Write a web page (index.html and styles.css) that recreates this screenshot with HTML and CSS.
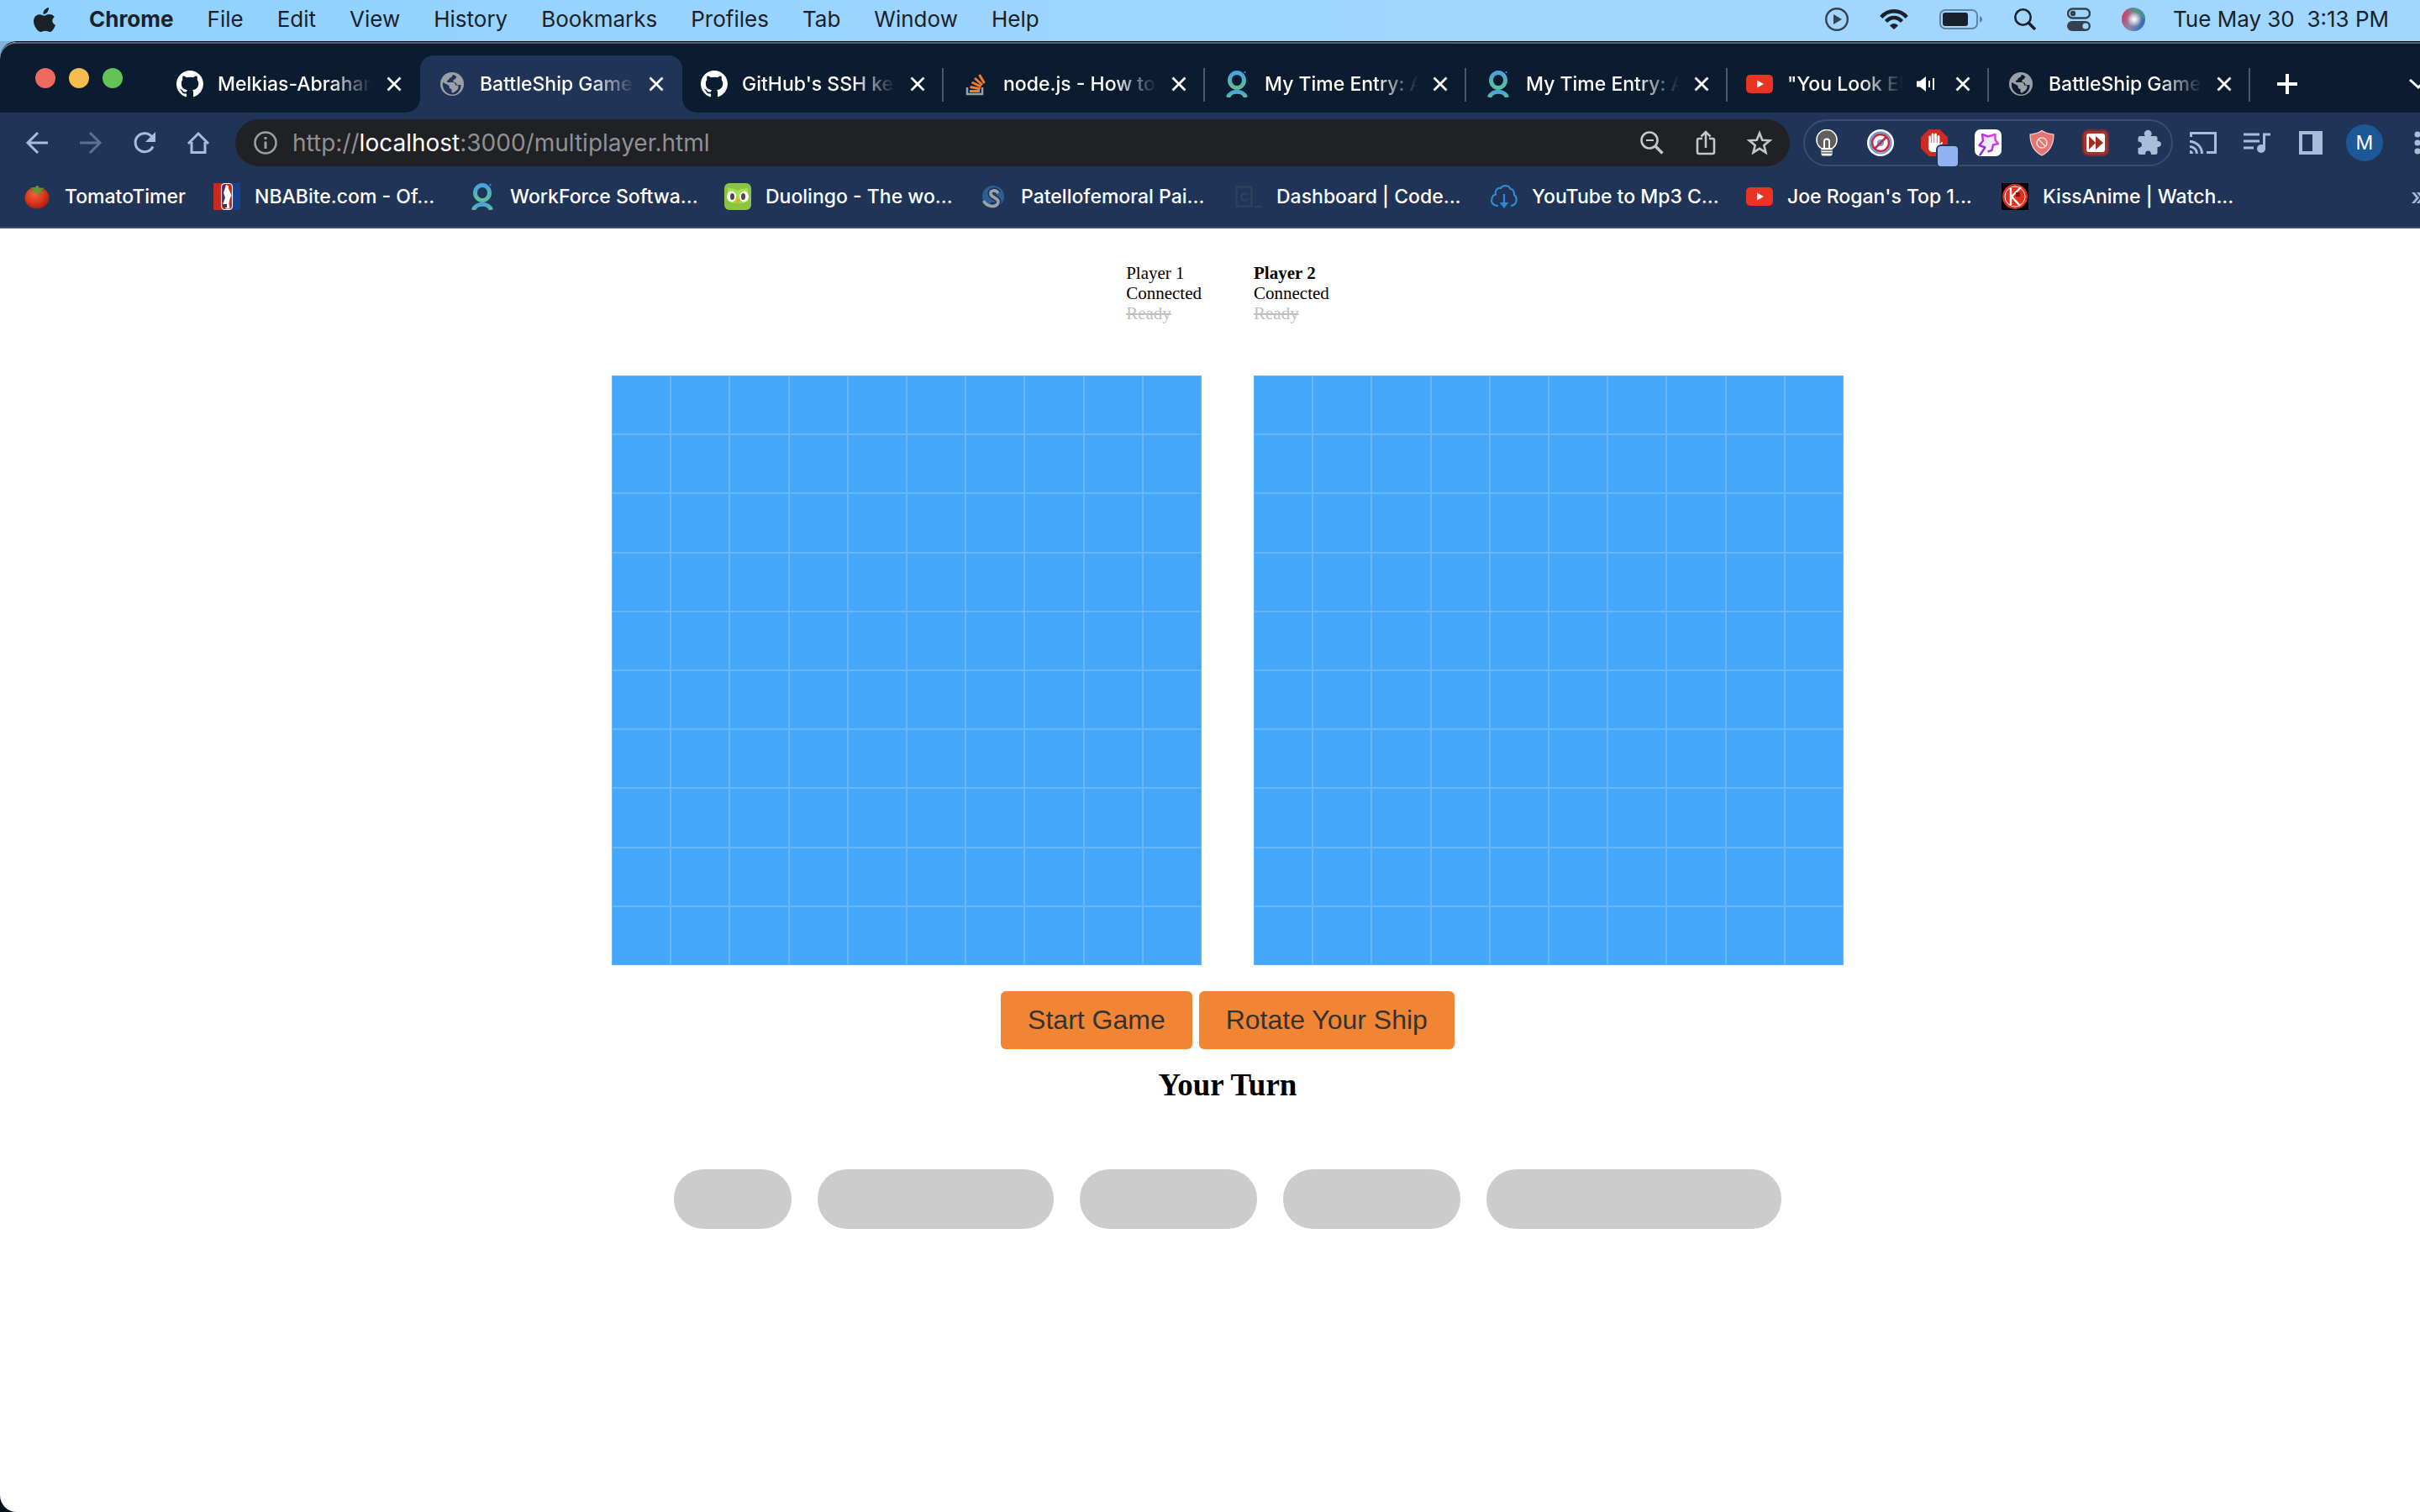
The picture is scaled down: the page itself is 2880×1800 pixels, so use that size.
FILE: index.html
```html
<!DOCTYPE html>
<html lang="en">
<head>
<meta charset="utf-8">
<title>BattleShip Game</title>
<link rel="stylesheet" href="styles.css">
</head>
<body>
<svg class="defs" aria-hidden="true">
  <defs>
    <linearGradient id="teal" x1="0" y1="0" x2="0" y2="1"><stop offset="0" stop-color="#4aa3dc"/><stop offset="1" stop-color="#5bc09a"/></linearGradient>
    <linearGradient id="purple" x1="0" y1="1" x2="1" y2="0"><stop offset="0" stop-color="#7a2bd0"/><stop offset="1" stop-color="#ee3df0"/></linearGradient>
    <radialGradient id="tomato" cx=".4" cy=".35" r=".7"><stop offset="0" stop-color="#f4603c"/><stop offset=".6" stop-color="#d93217"/><stop offset="1" stop-color="#9c2010"/></radialGradient>
    <radialGradient id="glow"><stop offset="0" stop-color="#fff"/><stop offset=".3" stop-color="#fff" stop-opacity=".75"/><stop offset="1" stop-color="#fff" stop-opacity="0"/></radialGradient>
    <linearGradient id="siri" x1="0" y1=".3" x2="1" y2=".7"><stop offset="0" stop-color="#d8345f"/><stop offset=".45" stop-color="#8a86a8"/><stop offset="1" stop-color="#2a6ab8"/></linearGradient>
    <symbol id="github" viewBox="0 0 16 16"><path fill="#fff" d="M8 0C3.58 0 0 3.58 0 8c0 3.54 2.29 6.53 5.47 7.59.4.07.55-.17.55-.38 0-.19-.01-.82-.01-1.49-2.01.37-2.53-.49-2.69-.94-.09-.23-.48-.94-.82-1.13-.28-.15-.68-.52-.01-.53.63-.01 1.08.58 1.23.82.72 1.21 1.87.87 2.33.66.07-.52.28-.87.51-1.07-1.78-.2-3.64-.89-3.64-3.95 0-.87.31-1.59.82-2.15-.08-.2-.36-1.02.08-2.12 0 0 .67-.21 2.2.82.64-.18 1.32-.27 2-.27s1.36.09 2 .27c1.53-1.04 2.2-.82 2.2-.82.44 1.1.16 1.92.08 2.12.51.56.82 1.27.82 2.15 0 3.07-1.87 3.75-3.65 3.95.29.25.54.73.54 1.48 0 1.07-.01 1.93-.01 2.2 0 .21.15.46.55.38A8.01 8.01 0 0 0 16 8c0-4.42-3.58-8-8-8z"/></symbol>
    <symbol id="globe" viewBox="0 0 32 32"><circle cx="16" cy="16" r="14" fill="#9aa0a6"/><path fill="currentColor" d="M17 5c-1 1-1 3-3 3.500-2 .5-1 2.500-3 3-1.500.5-1.500 2 0 2.500h6c2 0 3 1.500 3 3.500 2 0 4 .5 3.500 2.500-.5 3-3 4.500-6 6.500-1 0-2-.5-2-1.500v-3c-2 0-3-1-3-3v-1L5 14c-1 6 2 13 10 14.500 3 .3 6-.5 8-2.500 2-2 4-5 3.500-9-2 0-3 1-4.500 0s-1-3-3-3-2.500-3 0-3.500c1.500-.5 1-2 2.500-3C20 6 18.500 5.200 17 5z"/></symbol>
    <symbol id="workforce" viewBox="0 0 32 32"><g fill="none" stroke="url(#teal)" stroke-width="5"><ellipse cx="16" cy="11.500" rx="8.500" ry="9"/><path d="M5.500 32C8 23 24 23 26.500 32"/></g><circle cx="25.500" cy="2" r="1" fill="#4aa3dc"/></symbol>
    <symbol id="overflow" viewBox="0 0 32 32"><path fill="none" stroke="#9aa0a6" stroke-width="2.500" d="M6 20v8h18v-8"/><path fill="none" stroke="#ee7f2d" stroke-width="3" d="M9 24.500h12M9.500 19.500l12 2.200M11.500 14l11 5M15 9l9 8M20.500 5l6 10"/></symbol>
    <symbol id="youtube" viewBox="0 0 32 32"><rect y="5" width="32" height="22" rx="5" fill="#e93323"/><path fill="#fff" d="M13 11.500l8 4.500-8 4.500z"/></symbol>
    <symbol id="close" viewBox="0 0 18 18"><path fill="none" stroke="#fff" stroke-width="2.800" d="M1.500 1.500l15 15M16.500 1.500l-15 15"/></symbol>
  </defs>
</svg>

<header class="menubar">
  <nav class="menus" aria-label="Menu bar">
    <button class="menu" aria-label="Apple"><svg class="apple" viewBox="0 0 26 32"><path fill="#1a2128" d="M18 0c.3 2-.6 4-1.800 5.500S13 8 11.500 7.800C11.200 6 12 4 13.200 2.600 14.400 1.200 16.400.2 18 0zM24.800 11.200c-3.600 2.200-3.300 7.700 1.200 9.500-1 3-3.800 8.300-6.600 8.300-2 0-3-1.200-5.400-1.200S10.300 29 8.500 29C5 29 0 22 0 16.500 0 11 3.500 8.200 6.900 8.200c2.300 0 4.200 1.500 5.600 1.500 1.300 0 3.600-1.700 6.200-1.700 2.500 0 4.700 1.200 6.100 3.200z" transform="translate(0 2)"/></svg></button>
    <button class="menu app">Chrome</button>
    <button class="menu">File</button>
    <button class="menu">Edit</button>
    <button class="menu">View</button>
    <button class="menu">History</button>
    <button class="menu">Bookmarks</button>
    <button class="menu">Profiles</button>
    <button class="menu">Tab</button>
    <button class="menu">Window</button>
    <button class="menu">Help</button>
  </nav>
  <div class="status">
    <svg width="28" height="28" viewBox="0 0 28 28"><circle cx="14" cy="14" r="12.800" fill="none" stroke="#34424f" stroke-width="2.400"/><path fill="#34424f" d="M10 8l10 6-10 6z"/></svg>
    <svg width="34" height="26" viewBox="0 0 34 26"><g fill="none" stroke="#1a2128" stroke-width="4.400"><path d="M1.800 10.500C10 .8 24 .8 32.200 10.500"/><path d="M7.500 15.500c5.500-6 13.500-6 19 0"/></g><path fill="#1a2128" d="M17 25l-5-4.500c2.500-3.500 7.500-3.500 10 0z"/></svg>
    <svg width="52" height="24" viewBox="0 0 52 24"><rect x="1" y="1" width="44" height="22" rx="6" fill="none" stroke="#5f829d" stroke-width="2"/><rect x="4" y="4" width="30" height="16" rx="3" fill="#1a2128"/><path fill="#5f829d" d="M48 8c4 1.500 4 6.500 0 8z"/></svg>
    <svg width="26" height="26" viewBox="0 0 26 26"><circle cx="10.500" cy="10.500" r="9.200" fill="none" stroke="#1a2128" stroke-width="2.600"/><path stroke="#1a2128" stroke-width="3.600" d="M17 17l8 8"/></svg>
    <svg width="28" height="28" viewBox="0 0 28 28"><rect x="1" y="1.500" width="26" height="11" rx="5.500" fill="none" stroke="#34424f" stroke-width="2.400"/><circle cx="7" cy="7" r="3.200" fill="#34424f"/><rect y="16" width="28" height="12" rx="6" fill="#34424f"/><circle cx="22" cy="22" r="3.600" fill="#a0d6ff"/></svg>
    <svg width="28" height="28" viewBox="0 0 28 28"><circle cx="14" cy="14" r="14" fill="url(#siri)"/><path fill="#3f9c7c" opacity=".85" d="M7 2.500C15-2 27 3 27.500 14 22 8 15 5 7 2.500z"/><circle cx="15" cy="14" r="9" fill="url(#glow)"/></svg>
    <time class="clock">Tue May 30&nbsp; 3:13 PM</time>
  </div>
</header>

<div class="desktop">
<div class="window">
  <div class="tabstrip">
    <div class="lights">
      <button class="light red" aria-label="Close window"></button>
      <button class="light yellow" aria-label="Minimize"></button>
      <button class="light green" aria-label="Zoom"></button>
    </div>
    <div class="tabs">
      <div class="tab"><svg class="fav"><use href="#github"/></svg><span class="title">Melkias-Abraham</span><button class="close" aria-label="Close tab"><svg><use href="#close"/></svg></button></div>
      <div class="tab active"><svg class="fav"><use href="#globe"/></svg><span class="title">BattleShip Game</span><button class="close" aria-label="Close tab"><svg><use href="#close"/></svg></button></div>
      <div class="tab divided"><svg class="fav"><use href="#github"/></svg><span class="title">GitHub's SSH keys</span><button class="close" aria-label="Close tab"><svg><use href="#close"/></svg></button></div>
      <div class="tab divided"><svg class="fav"><use href="#overflow"/></svg><span class="title">node.js - How to fix</span><button class="close" aria-label="Close tab"><svg><use href="#close"/></svg></button></div>
      <div class="tab divided"><svg class="fav"><use href="#workforce"/></svg><span class="title">My Time Entry: Abr</span><button class="close" aria-label="Close tab"><svg><use href="#close"/></svg></button></div>
      <div class="tab divided"><svg class="fav"><use href="#workforce"/></svg><span class="title">My Time Entry: Abr</span><button class="close" aria-label="Close tab"><svg><use href="#close"/></svg></button></div>
      <div class="tab divided"><svg class="fav"><use href="#youtube"/></svg><span class="title">"You Look Elite</span><svg class="sound" viewBox="0 0 22 20"><path fill="#fff" d="M0 6.500h4L11 1v18l-7-5.500H0z"/><path stroke="#fff" stroke-width="2" d="M15 6v8M20 3v14"/></svg><button class="close" aria-label="Close tab"><svg><use href="#close"/></svg></button></div>
      <div class="tab divided"><svg class="fav"><use href="#globe"/></svg><span class="title">BattleShip Game</span><button class="close" aria-label="Close tab"><svg><use href="#close"/></svg></button></div>
      <button class="newtab" aria-label="New tab"><svg width="26" height="26" viewBox="0 0 26 26"><path stroke="#fff" stroke-width="4" d="M13 1v24M1 13h24"/></svg></button>
    </div>
    <button class="tabsearch" aria-label="Search tabs"><svg width="24" height="16" viewBox="0 0 24 16"><path fill="none" stroke="#fff" stroke-width="3" d="M2 3l10 9 10-9"/></svg></button>
  </div>

  <div class="toolbar">
    <button class="tool" aria-label="Back"><svg viewBox="0 0 32 32"><path fill="none" stroke="#a9bcd9" stroke-width="3" d="M29 16H5M17 4L5 16l12 12"/></svg></button>
    <button class="tool" aria-label="Forward"><svg viewBox="0 0 32 32"><path fill="none" stroke="#5d7092" stroke-width="3" d="M3 16h24M15 4l12 12-12 12"/></svg></button>
    <button class="tool" aria-label="Reload"><svg viewBox="0 0 32 32"><path fill="none" stroke="#a9bcd9" stroke-width="3" d="M26 20.500A11 11 0 1 1 25.500 10"/><path fill="#a9bcd9" d="M29 3v12H17z"/></svg></button>
    <button class="tool" aria-label="Home"><svg viewBox="0 0 32 32"><path fill="none" stroke="#a9bcd9" stroke-width="3" d="M4 17L16 5l12 12M8 15v12.500h16V15"/></svg></button>

    <div class="omnibox">
      <button class="tool" aria-label="Site information"><svg viewBox="0 0 32 32"><circle cx="16" cy="16" r="12.500" fill="none" stroke="#9aa0a6" stroke-width="2.600"/><path stroke="#9aa0a6" stroke-width="3" d="M16 14.500V23M16 9v3"/></svg></button>
      <a class="url" href="http://localhost:3000/multiplayer.html">http://<b>localhost</b>:3000/multiplayer.html</a>
      <button class="tool" aria-label="Zoom level"><svg viewBox="0 0 32 32"><circle cx="13" cy="13" r="9.500" fill="none" stroke="#c3c6ca" stroke-width="2.600"/><path stroke="#c3c6ca" stroke-width="2" d="M9 13h9"/><path stroke="#c3c6ca" stroke-width="3.600" d="M20 20l8.500 8.500"/></svg></button>
      <button class="tool" aria-label="Share"><svg viewBox="0 0 32 32"><path fill="none" stroke="#c3c6ca" stroke-width="2.600" d="M12 11H8q-2 0-2 2v14q0 2 2 2h16q2 0 2-2V13q0-2-2-2h-4M16 22V4M10.500 8.500L16 3l5.500 5.500"/></svg></button>
      <button class="tool" aria-label="Bookmark this tab"><svg viewBox="0 0 32 32"><path fill="none" stroke="#c3c6ca" stroke-width="2.600" d="M16 4.500l3.300 8.200 8.900.6-6.900 5.700 2.200 8.600-7.500-4.800-7.500 4.800 2.200-8.600-6.900-5.700 8.900-.6z"/></svg></button>
    </div>

    <div class="extensions">
      <button class="tool" aria-label="Lights off"><svg viewBox="0 0 32 32"><circle cx="16" cy="12.500" r="12" fill="#5f5f5f" stroke="#fff" stroke-width="1.600"/><path fill="#5f5f5f" stroke="#fff" stroke-width="2" d="M13 22v-8q0-2.500 3-2.500t3 2.500v8"/><rect x="9.500" y="22" width="13" height="9.500" rx="2" fill="#fff"/><path stroke="#5f5f5f" stroke-width="1.500" d="M10 25h12M10 28h12"/></svg></button>
      <button class="tool" aria-label="Blocker"><svg viewBox="0 0 32 32"><circle cx="16" cy="16" r="16" fill="#fff"/><circle cx="16" cy="16" r="12.500" fill="none" stroke="#5f93e8" stroke-width="2"/><circle cx="16" cy="16" r="4" fill="#6aa0ea"/><g fill="none" stroke="#c3283c" stroke-width="2.600"><circle cx="16" cy="16" r="10"/><path d="M9 23L23 9"/></g></svg></button>
      <button class="tool" aria-label="Ad block"><svg viewBox="0 0 32 32"><path fill="#d02b20" d="M9.500 0h13L32 9.500v13L22.500 32h-13L0 22.500v-13z"/><g stroke="#fff" stroke-width="2.800" stroke-linecap="round"><path d="M10.500 9v10M14 6v12M17.500 6v12M21 8.500v12"/></g><path fill="#fff" d="M9.100 16h13.300v3l1.500-3q1-1.500 2.100-.5l-3.500 9q-1 2.500-3.500 2.500h-5q-4 0-4.900-4z"/></svg><i class="badge"></i></button>
      <button class="tool" aria-label="Magic star"><svg viewBox="0 0 32 32"><rect width="32" height="32" rx="7" fill="#fff"/><path fill="#f1e9f6" d="M13 20l-6-1.500 3-5L9 6l7 2.500L24.500 6v6.500L28 17l-6 1.500-1 6z"/><path fill="none" stroke="url(#purple)" stroke-width="2.400" stroke-linejoin="round" d="M6 31l6.500-9.500L5.500 19l4.500-5.500L9 6l7 2.500L24.500 6v6.500L28 17l-6 1.500-1.500 6.500-5 1.500"/></svg></button>
      <button class="tool" aria-label="Shield"><svg viewBox="0 0 32 32"><path fill="#e57570" stroke="#f2d3d2" stroke-width="1.200" d="M16 1.500c4 3 8.500 4 14 4.500 0 12-4 20-14 25C6 26 2 18 2 6c5.500-.5 10-1.500 14-4.500z"/><g fill="none" stroke="#f0dcdc" stroke-width="1.600"><circle cx="16" cy="16" r="6"/><path d="M12 12l8 8"/></g></svg></button>
      <button class="tool" aria-label="Skip"><svg viewBox="0 0 32 32"><rect x="1" y="1" width="30" height="30" rx="6" fill="#a83229" stroke="#7e2a33" stroke-width="2"/><rect x="5" y="5" width="22" height="22" rx="3" fill="#fff"/><path fill="#a32b22" d="M8 8l8 8-8 8zM16 8l9 8-9 8z"/></svg></button>
      <button class="tool" aria-label="Extensions"><svg viewBox="0 0 32 32"><path fill="#a9bcd9" d="M9.500 8H11a4.300 4.300 0 1 1 6.500 0H23q2.500 0 2.500 2.500V14a3.600 3.600 0 1 1 0 7v6.500Q25.500 30 23 30h-5c0-2.500-1-4.500-3.500-4.500S11 27.500 11 30H5q-2.500 0-2.500-2.500V22c2.500 0 4.500-1.200 4.500-3.700S5 14.500 2.500 14.500v-4Q2.500 8 5 8z"/></svg></button>
    </div>

    <div class="actions">
      <button class="tool" aria-label="Cast"><svg viewBox="0 0 32 32"><g fill="none" stroke="#a9bcd9" stroke-width="3"><path d="M1.500 9V4.500h29v23H20"/><path d="M0 14.500A14.500 14.500 0 0 1 14.500 29M0 20.500A8.500 8.500 0 0 1 8.500 29"/></g><path fill="#a9bcd9" d="M0 25a4 4 0 0 1 4 4H0z"/></svg></button>
      <button class="tool" aria-label="Media"><svg viewBox="0 0 32 32"><path stroke="#a9bcd9" stroke-width="3" d="M0 6h19M0 14h19M0 22h12"/><circle cx="21" cy="23" r="5" fill="#a9bcd9"/><path fill="none" stroke="#a9bcd9" stroke-width="3" d="M24.500 23V6H32"/></svg></button>
      <button class="tool" aria-label="Side panel"><svg viewBox="0 0 32 32"><path fill="#a9bcd9" fill-rule="evenodd" d="M2 2h28v28H2zM6 6v20h12V6z"/></svg></button>
      <button class="avatar" aria-label="Profile M">M</button>
      <button class="tool" aria-label="More"><svg viewBox="0 0 32 32"><g fill="#a9bcd9"><circle cx="15" cy="6" r="3.500"/><circle cx="15" cy="16" r="3.500"/><circle cx="15" cy="26" r="3.500"/></g></svg></button>
    </div>
  </div>

  <nav class="bookmarks" aria-label="Bookmarks">
    <a class="bookmark short" href="#"><svg viewBox="0 0 32 32"><ellipse cx="16" cy="17.500" rx="14.500" ry="13" fill="url(#tomato)"/><path fill="#5c9a33" d="M15 3h2.500l.5 3.500 7-1-4 3 4 4-6-2-2.500 5-2-5.500-6.500 1.500 4-4-4-2.500 6.500.5z"/></svg><span>TomatoTimer</span></a>
    <a class="bookmark" href="#"><svg viewBox="0 0 32 32"><path fill="#c9281e" d="M0 0h16v32H0z"/><path fill="#17408b" d="M16 0h16v32H16z"/><rect x="9.500" y=".5" width="13" height="31" rx="4" fill="#c9281e" stroke="#fff" stroke-width="1.200"/><path fill="#17408b" d="M10.500 4q0-2.500 3-2.500h1L12 12l2 6-3.500 8z"/><path fill="#fff" d="M15 2l3 1.500v3l3.500 8-2 4-1 6 1 6H15l-4-5 3-8-2-6 2-6z"/><path fill="#17408b" d="M11 25h5v4h-5z"/></svg><span>NBABite.com - Of...</span></a>
    <a class="bookmark" href="#"><svg><use href="#workforce"/></svg><span>WorkForce Softwa...</span></a>
    <a class="bookmark" href="#"><svg viewBox="0 0 32 32"><rect width="32" height="32" rx="6" fill="#8bc53f"/><path fill="#a5e04a" d="M4 6q8 0 12 3 4-3 12-3v14q-6 6-12 3-6 3-12-3z"/><ellipse cx="8.500" cy="16" rx="5.500" ry="6.500" fill="#fff"/><ellipse cx="23.500" cy="16" rx="5.500" ry="6.500" fill="#fff"/><ellipse cx="9.500" cy="16" rx="2.500" ry="4" fill="#4b4b4b"/><ellipse cx="22.500" cy="16" rx="2.500" ry="4" fill="#4b4b4b"/><path fill="#f5a02c" d="M16 18l3.500 3-3.500 3.500-3.500-3.500z"/></svg><span>Duolingo - The wo...</span></a>
    <a class="bookmark" href="#"><svg viewBox="0 0 32 32"><circle cx="16" cy="16" r="13" fill="#2a6096"/><path fill="none" stroke="#203457" stroke-width="7" d="M22 12c-3-5-10-3.500-9 1s9 4.500 9 9-6 6-10 3"/><path fill="none" stroke="#9ba3aa" stroke-width="3.600" d="M22 12c-3-5-10-3.500-9 1s9 4.500 9 9-5 6.500-10 5c-4-1-6-3-7.500-6"/></svg><span>Patellofemoral Pai...</span></a>
    <a class="bookmark" href="#"><svg viewBox="0 0 32 32"><g fill="none" stroke="#28445a" stroke-width="2.600"><path d="M1.500 4.500h18v23h-18z"/><path d="M14.500 14c-1-2.500-7-2.500-7 2.500s6 5 7 2M23 28h8"/></g></svg><span>Dashboard | Code...</span></a>
    <a class="bookmark" href="#"><svg viewBox="0 0 32 32"><g fill="none" stroke="#3187d2" stroke-width="2.200"><path d="M9 27C3 27 0 23 1.500 19c0-3 2-5 4.500-5.500C5 9 8 5 12 6c2-4 10-4 11.500 1 3.500 0 4.500 4 4.500 7 4 3 4 12-4 13M16 13v13"/></g><path fill="#3187d2" d="M10.500 23h11L16 30z"/></svg><span>YouTube to Mp3 C...</span></a>
    <a class="bookmark" href="#"><svg><use href="#youtube"/></svg><span>Joe Rogan's Top 1...</span></a>
    <a class="bookmark" href="#"><svg viewBox="0 0 32 32"><path d="M0 0h32v32H0z"/><circle cx="16" cy="16" r="15" fill="#e5301f"/><circle cx="16" cy="16" r="12" fill="none" stroke="#fff" stroke-width="1"/><path fill="none" stroke="#fff" stroke-width="2.400" d="M11 6v20M23 5L12 16l10 11"/><path fill="#7c1a12" d="M17 11h5v5h-5z"/></svg><span>KissAnime | Watch...</span></a>
    <button class="more" aria-label="More bookmarks">»</button>
  </nav>

  <main class="page">
    <section class="boards">
      <div class="side mine">
        <div class="player"><div>Player 1</div><div>Connected</div><div class="off">Ready</div></div>
        <div class="board"></div>
      </div>
      <div class="side">
        <div class="player"><div class="you">Player 2</div><div>Connected</div><div class="off">Ready</div></div>
        <div class="board"></div>
      </div>
    </section>
    <div class="controls">
      <button class="btn">Start Game</button>
      <button class="btn">Rotate Your Ship</button>
    </div>
    <h3 class="turn">Your Turn</h3>
    <div class="ships">
      <div class="ship destroyer"></div>
      <div class="ship battleship"></div>
      <div class="ship cruiser"></div>
      <div class="ship cruiser"></div>
      <div class="ship carrier"></div>
    </div>
  </main>
</div>
</div>
<script src="app.js"></script>
</body>
</html>
```
FILE: styles.css
```css
* { box-sizing: border-box; }

html, body { height: 100%; }

body {
  margin: 0;
  display: flex;
  flex-direction: column;
  overflow: hidden;
  background: #06101d;
  font-family: Inter, "Liberation Sans", sans-serif;
}

button {
  margin: 0;
  padding: 0;
  border: 0;
  background: none;
  font: inherit;
  color: inherit;
}

a { color: inherit; text-decoration: none; }

svg { display: block; flex: none; }

.defs { position: absolute; width: 0; height: 0; }

/* System menu bar */
.menubar {
  flex: none;
  display: flex;
  justify-content: space-between;
  align-items: center;
  height: 49px;
  padding: 0 37px 4px 40px;
  background: linear-gradient(90deg, #90d1ff, #a0d6ff 60%);
  color: #1a2128;
  font-size: 26px;
  white-space: nowrap;
}

.menus { display: flex; align-items: center; gap: 40px; }
.app { font-weight: 700; }
.apple { width: 26px; height: 32px; }

.status { display: flex; align-items: center; gap: 37px; }
.clock { margin-left: -4px; }

/* Browser window, wider than the screen */
.desktop {
  flex: 1;
  display: flex;
  min-height: 0;
  background: linear-gradient(#7fb4dc 0 40px, #06101d 40px);
}

.window {
  flex: none;
  display: flex;
  flex-direction: column;
  width: calc(100% + 42px);
  border-top: 1px solid #000;
  border-radius: 20px;
  background: #fff;
  overflow: hidden;
}

.tabstrip {
  flex: none;
  display: flex;
  height: 84px;
  border-top: 2px solid #56616f;
  padding: 14px 30px 0 42px;
  background: #0b1b30;
  color: #fff;
  border-radius: 20px 0 0 0;
}

.lights { display: flex; gap: 16px; padding-top: 15px; width: 146px; }
.light { width: 24px; height: 24px; border-radius: 50%; }
.red { background: #ee6a5f; }
.yellow { background: #f5bd4f; }
.green { background: #61c454; }

.tabs { flex: 1; display: flex; }

.tab {
  position: relative;
  display: flex;
  align-items: center;
  width: 312px;
  padding: 0 22px;
  font-size: 23px;
  font-weight: 500;
  color: #fff;
}

.fav { width: 32px; height: 32px; margin-right: 17px; color: #0b1b30; }

.title {
  flex: 1;
  min-width: 0;
  overflow: hidden;
  white-space: nowrap;
  -webkit-mask-image: linear-gradient(90deg, #000 calc(100% - 52px), transparent);
  mask-image: linear-gradient(90deg, #000 calc(100% - 52px), transparent);
}

.sound { width: 22px; height: 20px; margin-left: 16px; }

.close { margin-left: 17px; }
.close svg { width: 18px; height: 18px; }
.sound + .close { margin-left: 24px; }

.divided { width: 311px; }
.divided::after {
  content: "";
  position: absolute;
  right: 0;
  top: 15px;
  width: 2px;
  height: 40px;
  background: #4b5869;
}

.active { background: #203457; border-radius: 16px 16px 0 0; }
.active .fav { color: #203457; }

.active::before,
.active::after {
  content: "";
  position: absolute;
  bottom: 0;
  width: 16px;
  height: 16px;
  background: radial-gradient(circle at 0 0, transparent 15px, #203457 16px);
}
.active::before { left: -16px; }
.active::after { right: -16px; transform: scaleX(-1); }

.newtab { padding: 0 31px; }
.tabsearch { padding-right: 2px; }

/* Toolbar */
.toolbar {
  flex: none;
  display: flex;
  align-items: center;
  height: 72px;
  padding: 0 28px;
  background: #203457;
}

.tool { position: relative; width: 32px; height: 32px; flex: none; }
.tool svg { width: 32px; height: 32px; }
.toolbar > .tool { margin-right: 32px; }
.toolbar > .tool:nth-child(4) { margin-right: 28px; }

.omnibox {
  flex: 1;
  display: flex;
  align-items: center;
  gap: 32px;
  height: 56px;
  padding: 0 20px;
  border-radius: 28px;
  background: #202124;
}

.url {
  flex: 1;
  margin-left: -16px;
  color: #8f9195;
  font-size: 28px;
}
.url b { font-weight: 400; color: #fff; }

.extensions {
  display: flex;
  align-items: center;
  gap: 32px;
  height: 56px;
  margin: 0 20px 0 16px;
  padding: 0 10px;
  border: 2px solid #3b4d6d;
  border-radius: 28px;
}

.badge {
  position: absolute;
  left: 20px;
  top: 20px;
  width: 24px;
  height: 24px;
  border-radius: 4px;
  background: #93b2f2;
  box-shadow: 0 0 0 2px #203457;
}

.actions { display: flex; align-items: center; gap: 32px; }

.avatar {
  width: 44px;
  height: 44px;
  margin: 0 -6px;
  border-radius: 50%;
  background: #1c5797;
  color: #fff;
  font-size: 23px;
}

/* Bookmarks bar */
.bookmarks {
  flex: none;
  display: flex;
  align-items: center;
  height: 66px;
  padding: 0 28px 8px;
  border-bottom: 2px solid #3b4d6d;
  background: #203457;
  color: #fff;
  font-size: 23px;
  font-weight: 500;
  white-space: nowrap;
}

.bookmark { display: flex; align-items: center; gap: 17px; width: 304px; }
.bookmark svg { width: 32px; height: 32px; }
.short { width: 226px; }
.more { margin-left: auto; padding-right: 8px; font-size: 28px; color: #a9bcd9; }

/* Game page */
.page {
  flex: 1;
  padding-top: 41px;
  color: #000;
  font-family: "Liberation Serif", serif;
  font-size: 21px;
  line-height: 24px;
}

.boards { display: flex; justify-content: center; gap: 62px; }

.side { width: 702px; }
.mine { display: flex; flex-direction: column; align-items: flex-end; }
.player { margin-bottom: 62px; }
.you { font-weight: 700; }
.off { color: #bfbfbf; text-decoration: line-through; }

.board {
  display: grid;
  grid-template: repeat(10, 1fr) / repeat(10, 1fr);
  width: 100%;
  aspect-ratio: 1;
  background: #45a7f9;
}
.cell { border: 1px solid #68b6fa; }

.controls { display: flex; justify-content: center; gap: 8px; margin-top: 31px; }

.btn {
  height: 69px;
  padding: 0 32px 2px;
  border-radius: 6px;
  background: #f28534;
  color: #333;
  font-family: "Liberation Sans", Arial, sans-serif;
  font-size: 32px;
}

.turn {
  margin: 22px 0 79px;
  font-size: 37px;
  line-height: 42px;
  text-align: center;
}

.ships { display: flex; justify-content: center; gap: 31px; }
.ship { height: 71px; border-radius: 35px; background: #ccc; }
.destroyer { width: 140px; }
.cruiser { width: 211px; }
.battleship { width: 281px; }
.carrier { width: 351px; }
```
FILE: app.js
```js
// Fill each board with its 10 x 10 squares.
document.querySelectorAll('.board').forEach(function (board) {
  for (var i = 0; i < 100; i++) {
    var cell = document.createElement('div');
    cell.className = 'cell';
    board.appendChild(cell);
  }
});
```
